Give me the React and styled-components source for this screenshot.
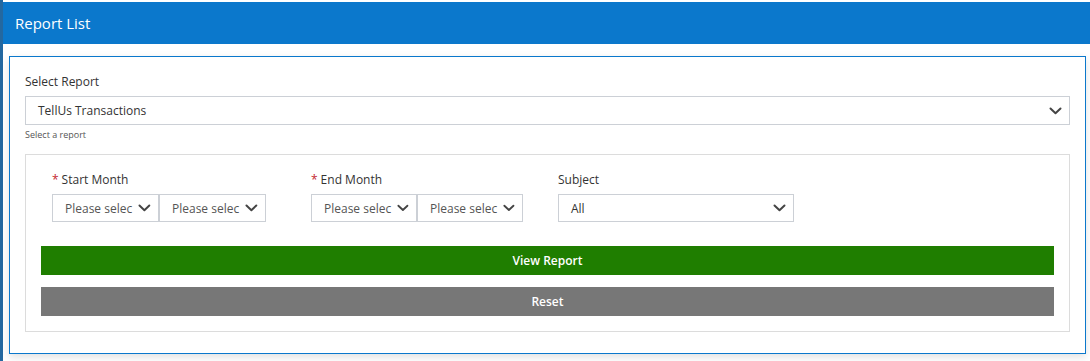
import React from "react";
import styled, { createGlobalStyle } from "styled-components";

const GlobalStyle = createGlobalStyle`
body{
  margin:0;
  background:#fff;
  font-family:"Open Sans","Noto Sans",sans-serif;
  color:#333;
}
`

const Page = styled.div`
display:flex;
min-height:361px;
padding-top:2px;
box-sizing:border-box;
border-left:3px solid #2468a0;
`

const Main = styled.div`
flex:1;
display:flex;
flex-direction:column;
`

const Header = styled.div`
height:42px;
background:#0b78cc;
color:#fff;
display:flex;
align-items:center;
padding-left:12px;
font-size:15px;
`

const Body = styled.div`
padding:12px 4px 0 6px;
`

const Card = styled.div`
border:1px solid #0b78cc;
background:#fff;
padding:17px 15px 21px 15px;
box-shadow:0 3px 8px rgba(0,0,0,0.12);
`

const Label = styled.div`
font-size:12px;
line-height:16px;
color:#333;
margin-bottom:6px;
`

const Star = styled.span`
color:#c4262e;
margin-right:3px;
`

const SelectBox = styled.div`
display:flex;
align-items:center;
justify-content:space-between;
box-sizing:border-box;
height:${p => p.$h || 29}px;
width:${p => p.$w ? p.$w + "px" : "auto"};
border:1px solid #ccd0d6;
background:#fff;
padding:0 7px 0 12px;
font-size:12px;
color:${p => p.$muted ? "#555" : "#333"};
`

const SelectText = styled.span`
white-space:nowrap;
flex:1;
padding-right:6px;
`

const HelpText = styled.div`
font-size:9px;
line-height:12px;
color:#555;
margin-top:4px;
`

const Panel = styled.div`
margin-top:13px;
border:1px solid #dcdcdc;
padding:17px 15px 15px 15px;
`

const FieldRow = styled.div`
display:flex;
padding-left:11px;
`

const Field = styled.div`
margin-right:${p => p.$gap || 0}px;
`

const Pair = styled.div`
display:flex;
`

const Button = styled.div`
height:29px;
display:flex;
align-items:center;
justify-content:center;
color:#fff;
font-size:12px;
font-weight:600;
background:${p => p.$bg};
margin-top:${p => p.$mt}px;
`

function Chevron(){
  return (
    <svg width="13" height="8" viewBox="0 0 13 8">
      <path d="M1.5 1.5 L6.5 6.2 L11.5 1.5" fill="none" stroke="#444" strokeWidth="2" strokeLinecap="round" strokeLinejoin="round"/>
    </svg>
  )
}

function Select({ text, w, h, muted }){
  return (
    <SelectBox $w={w} $h={h} $muted={muted}>
      <SelectText>{text}</SelectText>
      <Chevron />
    </SelectBox>
  )
}

export default function App(){
  return (
    <>
      <GlobalStyle />
      <Page>
        <Main>
          <Header>Report List</Header>
          <Body>
            <Card>
              <Label>Select Report</Label>
              <Select text="TellUs Transactions" />
              <HelpText>Select a report</HelpText>
              <Panel>
                <FieldRow>
                  <Field $gap={45}>
                    <Label><Star>*</Star>Start Month</Label>
                    <Pair>
                      <Select text="Please selec" w={107} h={28} muted />
                      <Select text="Please selec" w={107} h={28} muted />
                    </Pair>
                  </Field>
                  <Field $gap={35}>
                    <Label><Star>*</Star>End Month</Label>
                    <Pair>
                      <Select text="Please selec" w={106} h={28} muted />
                      <Select text="Please selec" w={106} h={28} muted />
                    </Pair>
                  </Field>
                  <Field>
                    <Label>Subject</Label>
                    <Select text="All" w={236} h={28} />
                  </Field>
                </FieldRow>
                <Button $bg="#1f7e00" $mt={24}>View Report</Button>
                <Button $bg="#777777" $mt={12}>Reset</Button>
              </Panel>
            </Card>
          </Body>
        </Main>
      </Page>
    </>
  )
}
